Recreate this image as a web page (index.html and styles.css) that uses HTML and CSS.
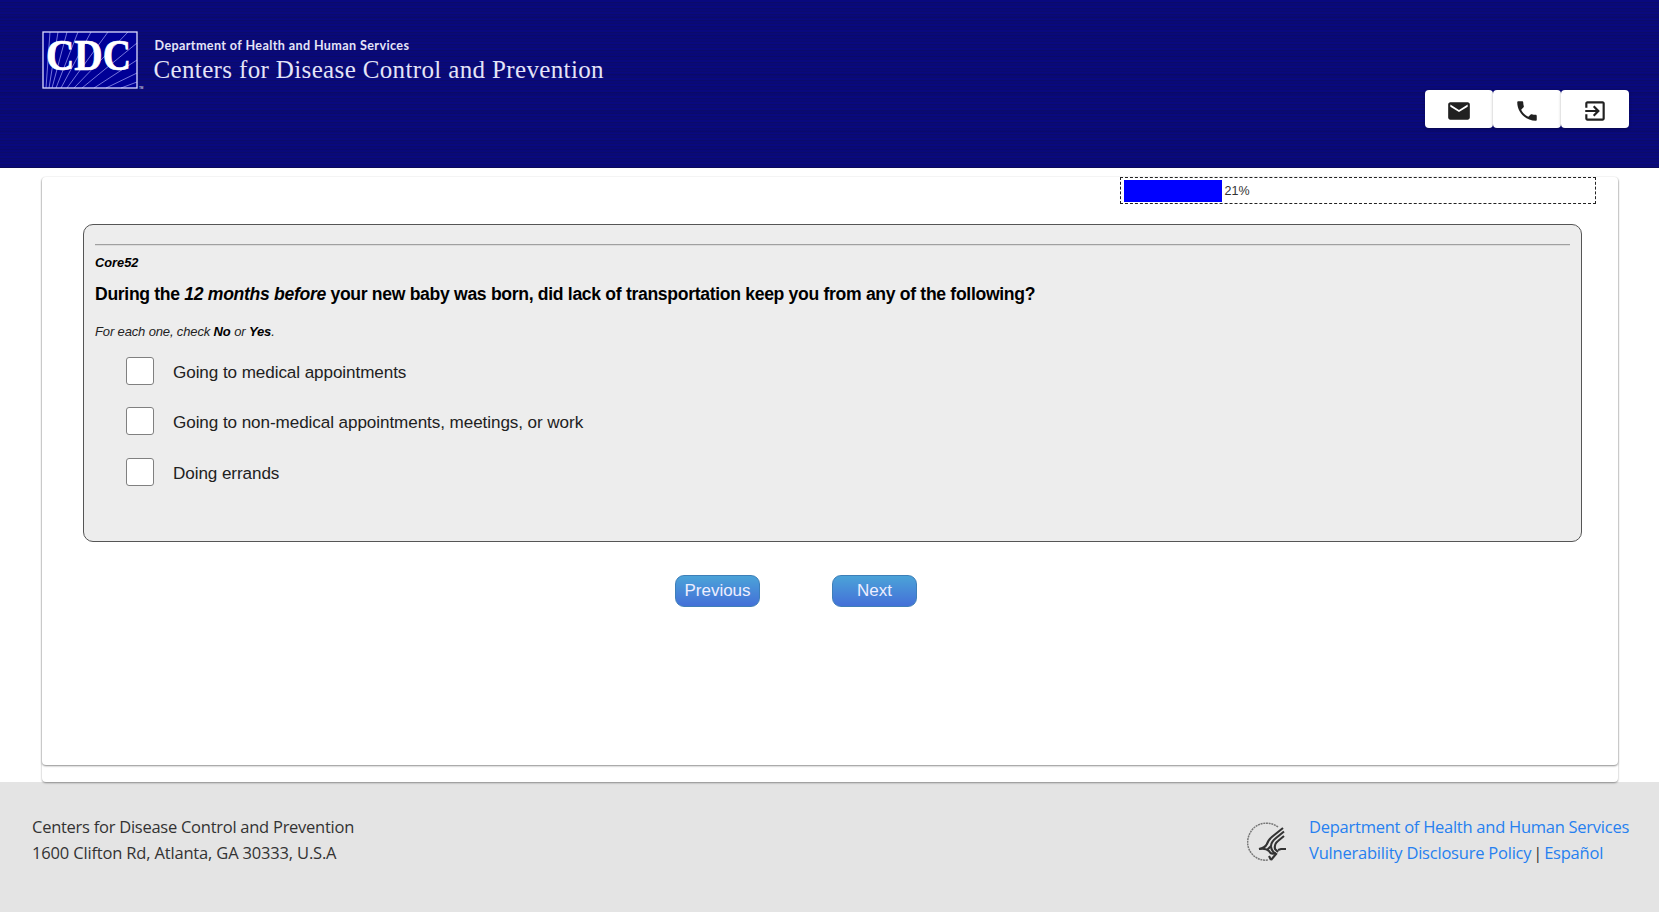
FILE: index.html
```html
<!DOCTYPE html>
<html lang="en">
<head>
    <meta charset="UTF-8">
    <meta name="viewport" content="width=device-width, initial-scale=1.0">
    <title>Core52</title>
    <link rel="stylesheet" href="styles.css">
</head>
<body>
    <!-- Header -->
    <header class="header">
        <div class="brand">
            <svg class="cdc-logo" viewBox="0 0 104 60">
                <rect x="1" y="1" width="94" height="56" fill="#000096"/>
                <g class="rays">
                    <path d="M4 57L8 1M7 57L16 1M10 57L25 1M14 57L36 1M19 57L49 1M25 57L66 1M32 57L86 1M40 57L95 12M52 57L95 29M64 57L95 42M79 57L95 51"/>
                </g>
                <text class="cdc-text" x="4" y="38.5" textLength="85" lengthAdjust="spacingAndGlyphs">CDC</text>
                <rect x="1" y="1" width="94" height="56" fill="none" stroke="#dcdcff" stroke-width="1.3"/>
                <text class="cdc-tm" x="97" y="58">TM</text>
            </svg>
            <div class="brand-text">
                <div class="brand-dept">Department of Health and Human Services</div>
                <div class="brand-name">Centers for Disease Control and Prevention</div>
            </div>
        </div>
        <nav class="tools">
            <button class="tool" aria-label="Email">
                <svg viewBox="0 0 24 24"><path d="M20 4H4c-1.100 0-1.990.9-1.990 2L2 18c0 1.100.9 2 2 2h16c1.100 0 2-.9 2-2V6c0-1.100-.9-2-2-2zm0 4l-8 5-8-5V6l8 5 8-5v2z"/></svg>
            </button>
            <button class="tool" aria-label="Phone">
                <svg viewBox="0 0 24 24"><path d="M6.620 10.790c1.440 2.830 3.760 5.140 6.590 6.590l2.200-2.200c.27-.27.67-.36 1.020-.24 1.120.37 2.330.57 3.570.57.55 0 1 .45 1 1V20c0 .55-.45 1-1 1-9.390 0-17-7.610-17-17 0-.55.45-1 1-1h3.500c.55 0 1 .45 1 1 0 1.250.2 2.450.57 3.570.11.35.03.74-.25 1.020l-2.200 2.200z"/></svg>
            </button>
            <button class="tool" aria-label="Exit">
                <svg viewBox="0 0 24 24"><path d="M10.090 15.590L11.500 17l5-5-5-5-1.410 1.410L12.670 11H3v2h9.670l-2.580 2.590zM19 3H5c-1.110 0-2 .9-2 2v4h2V5h14v14H5v-4H3v4c0 1.100.89 2 2 2h14c1.100 0 2-.9 2-2V5c0-1.100-.9-2-2-2z"/></svg>
            </button>
        </nav>
    </header>

    <!-- Survey -->
    <main class="outer-card">
        <div class="card">
            <div class="progress">
                <div class="progress-bar" style="width: 21%"></div>
                <span class="progress-label">21%</span>
            </div>

            <section class="question">
                <hr>
                <div class="question-id">Core52</div>
                <h1>During the <em>12 months before</em> your new baby was born, did lack of transportation keep you from any of the following?</h1>
                <p class="hint">For each one, check <b>No</b> or <b>Yes</b>.</p>
                <div class="options">
                    <label class="option"><input type="checkbox"><span>Going to medical appointments</span></label>
                    <label class="option"><input type="checkbox"><span>Going to non-medical appointments, meetings, or work</span></label>
                    <label class="option"><input type="checkbox"><span>Doing errands</span></label>
                </div>
            </section>

            <div class="actions">
                <button class="btn">Previous</button>
                <button class="btn">Next</button>
            </div>
        </div>
    </main>

    <!-- Footer -->
    <footer class="footer">
        <div class="address">
            <div>Centers for Disease Control and Prevention</div>
            <div class="address-street">1600 Clifton Rd, Atlanta, GA 30333, U.S.A</div>
        </div>
        <div class="footer-right">
            <svg class="hhs-logo" viewBox="0 0 40 40">
                <path class="ring" d="M31 5C23-1 11 0 5 8S-1 26 6 33Q12 39 21 38"/>
                <path class="bird" d="M36 6L26 14Q21 18 20 22Q18 26 12 27"/>
                <path class="bird" d="M37 9.500L29 16Q24 20 24 24L20 28"/>
                <path class="bird" d="M37 14L31 19Q27 22 28 27L31 30"/>
                <path class="bird" d="M12 27Q19 26 22 29Q24 33 29 31"/>
                <path class="bird" d="M24 25Q25 30 29 32L24 38M22 34L24 38M31 28L34 27H39"/>
            </svg>
            <div class="links">
                <div><a href="#">Department of Health and Human Services</a></div>
                <div class="links-policy"><a href="#">Vulnerability Disclosure Policy</a><span class="sep">|</span><a href="#">Español</a></div>
            </div>
        </div>
    </footer>
</body>
</html>
```
FILE: styles.css
```css
* {
    box-sizing: border-box;
}
body {
    margin: 0;
    height: 912px;
    overflow: hidden;
    display: flex;
    flex-direction: column;
    font-family: "Liberation Sans", Arial, sans-serif;
    background-color: #fff;
}

/* Header */
.header {
    height: 168px;
    flex: none;
    display: flex;
    justify-content: space-between;
    padding: 31px 30px 0 42px;
    background:
        repeating-linear-gradient(transparent 0 16px, rgba(0, 0, 40, 0.06) 16px 19px),
        repeating-linear-gradient(#09097f 0 2px, #0b0b6a 2px 3px, #09097a 3px 5px, #0b0b6e 5px 6px);
    border-bottom: 1px solid #0b0b58;
}
.brand {
    display: flex;
    align-items: flex-start;
}
.cdc-logo {
    width: 104px;
    height: 60px;
    overflow: visible;
}
.rays {
    fill: none;
    stroke: #7575dc;
    stroke-width: 1;
}
.cdc-text {
    font: bold 44px "Liberation Serif", serif;
    fill: #fff;
    stroke: #fff;
    stroke-width: 0.700;
}
.cdc-tm {
    font: 3px "Liberation Sans", sans-serif;
    fill: #fff;
}
.brand-text {
    padding: 7px 0 0 7.500px;
    color: #e4e4f8;
    white-space: nowrap;
}
.brand-dept {
    font: bold 12.600px/16px Lato, sans-serif;
    letter-spacing: 0.380px;
    padding-left: 1px;
}
.brand-name {
    font: 25px/31px "Liberation Serif", serif;
    letter-spacing: 0.360px;
}
.tools {
    display: flex;
    height: 38px;
    margin-top: 59px;
}
.tool {
    width: 67.900px;
    padding: 0;
    display: flex;
    align-items: center;
    justify-content: center;
    border: none;
    border-radius: 4px;
    background-color: #fff;
    box-shadow: 0 1px 3px rgba(0, 0, 0, 0.3);
}
.tool svg {
    width: 26px;
    height: 26px;
    margin-top: 3px;
    fill: #212121;
}

/* Cards */
.outer-card {
    position: relative;
    height: 605px;
    flex: none;
    margin: 9px 41px 0 42px;
    border-radius: 4px;
    background-color: #fff;
    box-shadow: 0 1px 2px rgba(0, 0, 0, 0.4);
}
.card {
    height: 588px;
    border-radius: 4px;
    background-color: #fff;
    box-shadow: 0 1px 2px rgba(0, 0, 0, 0.45);
}

/* Progress */
.progress {
    width: 476px;
    height: 27px;
    margin-left: 1078px;
    padding: 2px 2px 2px 3px;
    display: flex;
    align-items: center;
    border: 1px dashed #222;
}
.progress-bar {
    height: 22px;
    background-color: #0000ff;
}
.progress-label {
    margin-left: 2px;
    font-size: 12.500px;
    color: #333;
}

/* Question */
.question {
    height: 318px;
    margin: 20px 36px 0 41px;
    padding: 19px 11px 0;
    border: 1px solid #555;
    border-radius: 10px;
    background-color: #ededed;
}
.question hr {
    margin: 0;
    height: 2px;
    border: none;
    border-top: 1px solid #a0a0a0;
    border-bottom: 1px solid #dcdcdc;
}
.question-id {
    margin-top: 9px;
    font: italic bold 12.800px/16px "Liberation Sans", sans-serif;
}
.question h1 {
    margin: 12px 0 0;
    font-size: 17.600px;
    line-height: 22px;
    letter-spacing: -0.320px;
    white-space: nowrap;
}
.hint {
    margin: 19px 0 0;
    font-size: 13px;
    line-height: 16px;
    letter-spacing: -0.140px;
    font-style: italic;
    color: #222;
}
.hint b {
    color: #000;
}
.options {
    margin: 17px 0 0 30.500px;
}
.option {
    display: flex;
    height: 50.300px;
    align-items: flex-start;
    font-size: 17.100px;
    line-height: 31px;
    letter-spacing: -0.080px;
    color: #212121;
}
.option input {
    appearance: none;
    width: 28px;
    height: 28px;
    margin: 0 19.500px 0 0;
    border: 1px solid #808080;
    border-radius: 3px;
    background-color: #fff;
}

/* Buttons */
.actions {
    display: flex;
    gap: 72px;
    margin: 33px 0 0 633px;
}
.btn {
    width: 85px;
    height: 32px;
    padding: 0 0 1px;
    font: 17px "Liberation Sans", sans-serif;
    color: #eef;
    border: 1px solid #3e7fb8;
    border-radius: 9px;
    background: linear-gradient(#4ba3d8, #4470d8);
}

/* Footer */
.footer {
    flex: 1;
    display: flex;
    justify-content: space-between;
    padding: 32px 30px 0 32px;
    background-color: #e4e4e4;
    font: 16.500px/25.500px "Open Sans", sans-serif;
    letter-spacing: -0.260px;
    color: #333;
    white-space: nowrap;
}
.address-street {
    letter-spacing: -0.170px;
}
.footer-right {
    display: flex;
}
.hhs-logo {
    width: 40px;
    height: 40px;
    margin: 8px 22px 0 0;
}
.ring {
    fill: none;
    stroke: #777;
    stroke-width: 1.500;
    stroke-dasharray: 2 0.700;
}
.bird {
    fill: none;
    stroke: #333;
    stroke-width: 2.100;
}
.links a {
    color: #2680f0;
    text-decoration: none;
}
.links-policy {
    letter-spacing: -0.220px;
}
.sep {
    margin: 0 2px;
}
```
